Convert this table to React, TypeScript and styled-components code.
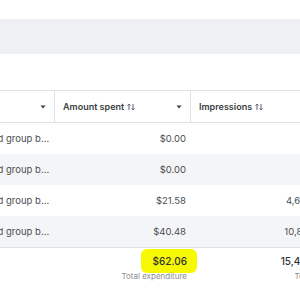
import React from 'react';
import styled, { createGlobalStyle } from 'styled-components';

const GlobalStyle = createGlobalStyle`
  html, body {
    margin: 0;
    padding: 0;
    background: #ffffff;
    overflow: hidden;
  }
  body {
    font-family: Inter, "Noto Sans", "Liberation Sans", sans-serif;
    color: #333333;
  }
`;

const Page = styled.div`
  width: 300px;
  height: 300px;
  overflow: hidden;
  display: flex;
  flex-direction: column;
`;

const Band = styled.div`
  margin-top: 19px;
  height: 35px;
  background: #eef0f3;
`;

const Table = styled.div`
  margin-top: 36px;
  margin-left: -17px;
  width: 340px;
  display: grid;
  grid-template-columns: 72px 136px 126px;
`;

const HeaderCell = styled.div<{ $last?: boolean }>`
  height: 31px;
  border-top: 1px solid #dfe1e4;
  border-bottom: 1px solid #dfe1e4;
  border-right: ${p => (p.$last ? 'none' : '1px solid #dfe1e4')};
  display: flex;
  align-items: center;
  padding: 0 8px;
  font-size: 9px;
  font-weight: 600;
  color: #3b3f42;
  gap: 3px;
`;

const HeaderLabel = styled.span`
  flex: 1;
  display: flex;
  align-items: center;
  gap: 3px;
  white-space: nowrap;
`;

const Cell = styled.div<{ $shade?: boolean; $num?: boolean; $lastRow?: boolean }>`
  height: 31px;
  background: ${p => (p.$shade ? '#f4f5f7' : '#ffffff')};
  border-bottom: ${p => (p.$lastRow ? '1px solid #dfe1e4' : 'none')};
  display: flex;
  align-items: center;
  justify-content: ${p => (p.$num ? 'flex-end' : 'flex-start')};
  padding: 0 5px 0 8px;
  font-size: 9.5px;
  color: #4a4d50;
  white-space: nowrap;
  overflow: hidden;
`;

const TotalCell = styled.div`
  padding: 1px 4px 0 8px;
  display: flex;
  flex-direction: column;
  align-items: flex-end;
  white-space: nowrap;
`;

const TotalValue = styled.span<{ $mark?: boolean }>`
  display: inline-block;
  font-size: 10px;
  font-weight: 500;
  color: #303336;
  line-height: 14px;
  padding: ${p => (p.$mark ? '5px 10px 5px 12px' : '5px 0')};
  margin-right: ${p => (p.$mark ? '-10px' : '0')};
  background: ${p => (p.$mark ? '#f6f900' : 'transparent')};
  border-radius: 6px;
`;

const TotalLabel = styled.span`
  font-size: 8px;
  color: #8a8e92;
  margin-top: -2px;
`;

const Caret = () => (
  <svg width="6" height="4" viewBox="0 0 6 4">
    <path d="M0.5 0.5h5L3 3.5z" fill="#3b3f42" />
  </svg>
);

const SortIcon = () => (
  <svg width="8" height="8" viewBox="0 0 8 8">
    <path d="M2 7V1.2M0.6 2.6L2 1.1 3.4 2.6" fill="none" stroke="#55606a" strokeWidth="1" />
    <path d="M6 1v5.8M4.6 5.4L6 6.9 7.4 5.4" fill="none" stroke="#55606a" strokeWidth="1" />
  </svg>
);

const rows = [
  { name: 'Ad group b...', spent: '$0.00', impressions: '' },
  { name: 'Ad group b...', spent: '$0.00', impressions: '' },
  { name: 'Ad group b...', spent: '$21.58', impressions: '4,638' },
  { name: 'Ad group b...', spent: '$40.48', impressions: '10,812' },
];

const App: React.FC = () => {
  return (
    <Page>
      <GlobalStyle />
      <Band />
      <Table>
        <HeaderCell>
          <HeaderLabel />
          <Caret />
        </HeaderCell>
        <HeaderCell>
          <HeaderLabel>
            Amount spent <SortIcon />
          </HeaderLabel>
          <Caret />
        </HeaderCell>
        <HeaderCell $last>
          <HeaderLabel>
            Impressions <SortIcon />
          </HeaderLabel>
        </HeaderCell>

        {rows.map((row, i) => (
          <React.Fragment key={i}>
            <Cell $shade={i % 2 === 1} $lastRow={i === rows.length - 1}>
              {row.name}
            </Cell>
            <Cell $num $shade={i % 2 === 1} $lastRow={i === rows.length - 1}>
              {row.spent}
            </Cell>
            <Cell $num $shade={i % 2 === 1} $lastRow={i === rows.length - 1}>
              {row.impressions}
            </Cell>
          </React.Fragment>
        ))}

        <TotalCell />
        <TotalCell>
          <TotalValue $mark>$62.06</TotalValue>
          <TotalLabel>Total expenditure</TotalLabel>
        </TotalCell>
        <TotalCell>
          <TotalValue>15,450</TotalValue>
          <TotalLabel>Total</TotalLabel>
        </TotalCell>
      </Table>
    </Page>
  );
};

export default App;
